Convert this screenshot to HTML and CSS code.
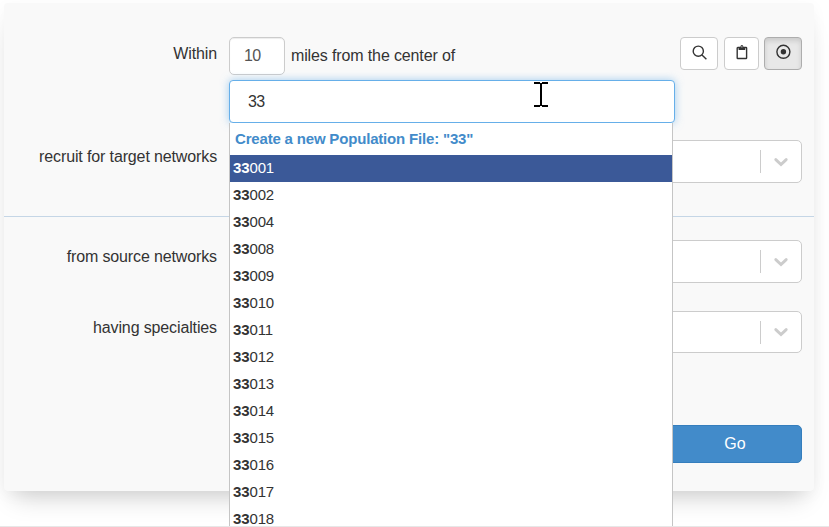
FILE: index.html
```
<!DOCTYPE html>
<html lang="en">
<head>
<meta charset="utf-8">
<title>Recruit</title>
<link rel="stylesheet" href="styles.css">
</head>
<body>
<main class="page">
<form class="card">
  <div class="row row-within">
    <label class="label">Within</label>
    <div class="control">
      <div class="toolbar">
        <div class="miles">10</div>
        <span class="miles-text">miles from the center of</span>
        <div class="buttons">
          <button type="button" class="btn"><svg width="16" height="16" viewBox="0 0 16 16"><circle cx="7.3" cy="6.2" r="5.1"/><path d="M11 9.9L15.4 14.3"/></svg></button>
          <button type="button" class="btn btn-narrow"><svg width="16" height="16" viewBox="0 0 16 16"><rect x="3.2" y="2.5" width="9.4" height="11" rx=".6"/><path class="solid" d="M4.6 5V2h1.8Q6.5 0 7.9 0T9.4 2h1.8v3z"/><circle class="hole" cx="7.9" cy="1.8" r=".6"/></svg></button>
          <button type="button" class="btn btn-active"><svg width="16" height="16" viewBox="0 0 16 16"><circle cx="8.4" cy="6.8" r="6.5"/><circle class="solid" cx="8.4" cy="6.8" r="2.7"/></svg></button>
        </div>
      </div>
      <div class="search">
        <div class="search-input">33</div>
        <div class="menu">
          <div class="create">Create a new Population File: "33"</div>
          <ul class="options">
            <li class="selected"><b>33</b>001</li>
            <li><b>33</b>002</li>
            <li><b>33</b>004</li>
            <li><b>33</b>008</li>
            <li><b>33</b>009</li>
            <li><b>33</b>010</li>
            <li><b>33</b>011</li>
            <li><b>33</b>012</li>
            <li><b>33</b>013</li>
            <li><b>33</b>014</li>
            <li><b>33</b>015</li>
            <li><b>33</b>016</li>
            <li><b>33</b>017</li>
            <li><b>33</b>018</li>
          </ul>
        </div>
        <svg class="cursor" width="14" height="25" viewBox="0 0 14 25"><path d="M0 1h6M8 1h6M0 24h6M8 24h6M7 1v23"/></svg>
      </div>
    </div>
  </div>
  <div class="row row-target">
    <label class="label">recruit for target networks</label>
    <div class="select"><span class="separator"></span><svg width="20" height="20" viewBox="0 0 20 20"><path d="M4.8 7.6l5.2 5 5.2-5"/></svg></div>
  </div>
  <div class="divider"></div>
  <div class="row row-source">
    <label class="label">from source networks</label>
    <div class="select"><span class="separator"></span><svg width="20" height="20" viewBox="0 0 20 20"><path d="M4.8 7.6l5.2 5 5.2-5"/></svg></div>
  </div>
  <div class="row row-specialties">
    <label class="label">having specialties</label>
    <div class="select select-short"><span class="separator"></span><svg width="20" height="20" viewBox="0 0 20 20"><path d="M4.8 7.6l5.2 5 5.2-5"/></svg></div>
  </div>
  <div class="actions"><button type="button" class="go">Go</button></div>
</form>
</main>
</body>
</html>
```
FILE: styles.css
```
* { box-sizing: border-box; }
body {
  margin: 0;
  background: #fff;
  color: #333;
  font: 16px/22px "Liberation Sans", Arial, sans-serif;
  letter-spacing: -.13px;
}
.page {
  height: 527px;
  padding: 3px 15px 0 4px;
  border-bottom: 1px solid #e7e7e7;
  overflow: hidden;
}
.card {
  height: 488px;
  padding-top: 34px;
  background: #f9f9f9;
  border-radius: 4px;
  box-shadow: 0 16px 24px -10px rgba(0, 0, 0, .18), 0 4px 16px rgba(0, 0, 0, .04);
}
.row {
  display: grid;
  grid-template-columns: 213px 573px;
  column-gap: 12px;
}
.label { padding-top: 6px; text-align: right; }
.toolbar { display: flex; height: 38px; }
.miles {
  width: 56px;
  padding: 7px 14px;
  background: #fff;
  border: 1px solid #ccc;
  border-radius: 5px;
  box-shadow: inset 0 1px 1px rgba(0, 0, 0, .075);
  color: #555;
  letter-spacing: -.7px;
}
.miles-text { padding: 8px 0 0 6px; }
.buttons { display: flex; gap: 5px; margin-left: auto; }
.btn {
  display: flex;
  justify-content: center;
  width: 38px;
  height: 33px;
  padding: 7px 0 0;
  background: #fff;
  border: 1px solid #ccc;
  border-radius: 4px;
}
.btn-narrow { width: 35px; margin-left: 1px; }
.btn-active {
  background: #e8e8e8;
  border-color: #adadad;
  box-shadow: inset 0 3px 5px rgba(0, 0, 0, .125);
}
.btn svg { overflow: visible; fill: none; stroke: #333; stroke-width: 1.4; }
.btn .solid { fill: #333; stroke: none; }
.btn .hole { fill: #fff; stroke: none; }
.search { position: relative; width: 446px; margin-top: 5px; }
.search-input {
  height: 43px;
  padding: 10px 18px;
  background: #fff;
  border: 1px solid #66afe9;
  border-radius: 4px;
  box-shadow: 0 0 8px rgba(102, 175, 233, .6);
  letter-spacing: -.7px;
}
.menu {
  position: absolute;
  z-index: 1;
  top: 43px;
  left: 0;
  width: 444px;
  height: 403px;
  overflow: hidden;
  background: #fff;
  border: solid #c5c5c5;
  border-width: 0 1px;
  font-size: 15px;
}
.create {
  height: 32px;
  padding: 5px;
  color: #428bca;
  font-weight: bold;
  letter-spacing: -.18px;
}
.options { margin: 0; padding: 0; list-style: none; }
.options li { height: 27px; padding: 0 3px; line-height: 25px; }
.options .selected { background: #3b5998; color: #fff; }
.cursor {
  position: absolute;
  z-index: 2;
  top: 2px;
  left: 305px;
  fill: none;
  stroke: #000;
  stroke-width: 2;
}
.row-target { margin-top: 17px; }
.select {
  display: flex;
  align-items: center;
  justify-content: flex-end;
  height: 43px;
  padding-right: 10px;
  background: #fff;
  border: 1px solid #ccc;
  border-radius: 5px;
}
.select-short { height: 42px; }
.separator { width: 1px; height: 23px; margin-right: 10px; background: #ccc; }
.select svg { fill: none; stroke: #ccc; stroke-width: 2.9; stroke-linecap: round; }
.divider { height: 1px; margin-top: 33px; background: #c5d6e6; }
.row-source { margin-top: 23px; }
.row-specialties { margin-top: 28px; }
.actions { display: flex; justify-content: flex-end; padding: 72px 12px 0 0; }
.go {
  width: 134px;
  height: 38px;
  padding: 0;
  color: #fff;
  background: #428bca;
  border: 1px solid #357ebd;
  border-radius: 5px;
  font: inherit;
}
```
